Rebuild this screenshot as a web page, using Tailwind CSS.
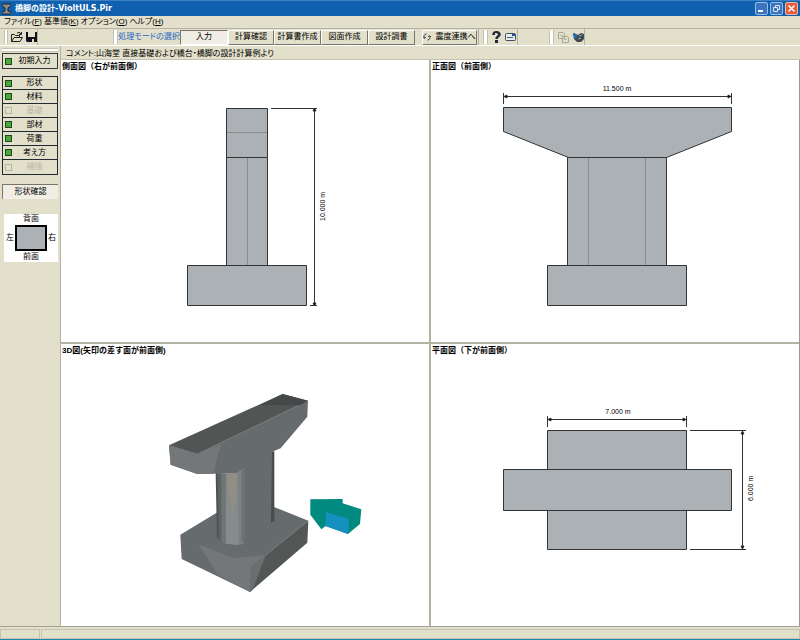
<!DOCTYPE html>
<html lang="ja">
  <head>
    <meta charset="UTF-8" />
    <meta name="viewport" content="width=device-width, initial-scale=1.0" />
    <title>橋脚の設計-VioltULS.Pir</title>
    <script src="https://cdn.jsdelivr.net/npm/@tailwindcss/browser@4"></script>
  </head>
  <body
    class="flex flex-col h-screen overflow-hidden bg-[#e2dfca] text-black text-[8px] leading-[12px] whitespace-nowrap font-['Liberation_Sans','Noto_Sans_CJK_JP',sans-serif] [font-feature-settings:'palt']"
  >
    <!-- Title Bar -->
    <header
      class="flex items-center shrink-0 h-4 pl-[2px] pr-[2px] gap-1 bg-[#1060b0] border-t border-[#3c80c4] text-white"
    >
      <svg class="w-[9px] h-3" viewBox="0 0 9 12" fill="none">
        <path d="M0 1h9v2L6 5v3l3 1v2H0V9l3-1V5L0 3z" fill="#8c8c84" stroke="#1c2430" />
      </svg>
      <h1 class="flex-1 font-bold font-['DejaVu_Sans','Noto_Sans_CJK_JP',sans-serif]">橋脚の設計-VioltULS.Pir</h1>
      <div class="flex gap-[2px]">
        <button aria-label="最小化" class="w-[13px] h-[13px] rounded-[2px] border border-[#9cbce4] bg-[#3c74c0]">
          <svg class="w-[11px] h-[11px]" viewBox="0 0 11 11"><path d="M2 7h5v2H2z" fill="#fff" /></svg>
        </button>
        <button aria-label="元に戻す" class="w-[13px] h-[13px] rounded-[2px] border border-[#9cbce4] bg-[#3c74c0]">
          <svg class="w-[11px] h-[11px]" viewBox="0 0 11 11" fill="none" stroke="#dce8f8">
            <path d="M4.500 4V2.500h4v4H7M2.500 4.500h4v4h-4z" />
          </svg>
        </button>
        <button aria-label="閉じる" class="w-[13px] h-[13px] rounded-[2px] border border-[#f0b8a8] bg-[#e45c3c]">
          <svg class="w-[11px] h-[11px]" viewBox="0 0 11 11" stroke="#fff" stroke-width="1.500">
            <path d="M2.500 2.500l6 6M8.500 2.500l-6 6" />
          </svg>
        </button>
      </div>
    </header>

    <!-- Menu -->
    <nav class="flex items-center shrink-0 h-3 pl-1 gap-[2px]">
      <a href="#">ファイル(<u>F</u>)</a>
      <a href="#">基準値(<u>K</u>)</a>
      <a href="#">オプション(<u>O</u>)</a>
      <a href="#">ヘルプ(<u>H</u>)</a>
    </nav>

    <!-- Toolbar -->
    <div class="flex items-stretch shrink-0 h-[18px] border-t border-[#b4b2a2] border-b border-b-white">
      <div class="flex items-center w-[38px] pl-1 gap-[3px] border-r border-[#b4b2a2]">
        <span class="w-1 h-[14px] border-x border-[#c4c2b0] bg-white"></span>
        <button aria-label="開く">
          <svg class="w-3 h-3" viewBox="0 0 12 12" fill="none" stroke="#202020">
            <path d="M.5 10.500v-7h3l1 1h4v2M.5 10.500l2.500-4h8.500l-2.500 4zM6 2.500c1-1.500 3-1.500 4 .500M10.500 1v2.500H8" />
          </svg>
        </button>
        <button aria-label="保存">
          <svg class="w-[11px] h-3" viewBox="0 0 11 12">
            <path d="M0 1h11v10H1L0 10z" fill="#101018" />
            <path d="M2 1h7v5H2zM6 8h2v3H6z" fill="#e2dfca" />
          </svg>
        </button>
      </div>
      <div class="flex items-center w-[366px] ml-[75px] border-r border-[#b4b2a2]">
        <span class="w-[5px] h-[14px] shrink-0 border-x border-[#c4c2b0] bg-white"></span>
        <span class="w-[62px] shrink-0 text-center text-[#2464c4]">処理モードの選択</span>
        <button class="w-12 h-[15px] border border-t-[#77756a] border-l-[#77756a] border-r-white border-b-white bg-[#f0ede4]">入力</button>
        <button class="w-[46px] h-[15px] border border-t-white border-l-white border-r-[#77756a] border-b-[#77756a]">計算確認</button>
        <button class="w-[47px] h-[15px] border border-t-white border-l-white border-r-[#77756a] border-b-[#77756a]">計算書作成</button>
        <button class="w-[47px] h-[15px] border border-t-white border-l-white border-r-[#77756a] border-b-[#77756a]">図面作成</button>
        <button class="w-[47px] h-[15px] border border-t-white border-l-white border-r-[#77756a] border-b-[#77756a]">設計調書</button>
        <button class="flex items-center justify-center gap-1 w-[55px] h-[15px] ml-[7px] border border-t-white border-l-white border-r-[#77756a] border-b-[#77756a]">
          <svg class="w-2 h-2" viewBox="0 0 8 8" fill="none" stroke="#404848">
            <path d="M3.500 1C1 1 .5 3 1.500 5M0 4l1.500 1.500L3 4M4.500 7C7 7 7.500 5 6.500 3M5 4l1.500-1.500L8 4" />
          </svg>
          震度連携へ
        </button>
      </div>
      <div class="flex items-center w-[35px] ml-1 gap-1 border-r border-[#b4b2a2]">
        <span class="w-[5px] h-[14px] border-x border-[#c4c2b0] bg-white"></span>
        <button aria-label="ヘルプ">
          <svg class="w-[9px] h-3" viewBox="0 0 9 12" fill="none">
            <path d="M1.500 4C1.500 .500 7.500 .500 7.500 3.500 7.500 5.500 4.500 5 4.500 8" stroke="#202830" stroke-width="2.500" />
            <path d="M3 9h3v3H3z" fill="#202830" />
            <path d="M3 2.500h2" stroke="#d0d0c8" />
          </svg>
        </button>
        <button aria-label="メール">
          <svg class="w-[11px] h-2" viewBox="0 0 11 8">
            <rect x=".5" y=".5" width="10" height="7" rx="1" fill="#e8ecec" stroke="#405060" />
            <path d="M2 4h6v1H2z" fill="#506078" />
            <path d="M7 1h3v2H7z" fill="#2050a0" />
          </svg>
        </button>
      </div>
      <div class="flex items-center w-9 ml-[31px] gap-1 border-r border-[#b4b2a2]">
        <span class="w-[5px] h-[14px] border-x border-[#c4c2b0] bg-white"></span>
        <button aria-label="コピー" disabled>
          <svg class="w-[11px] h-3" viewBox="0 0 11 12" fill="none" stroke="#aaa898">
            <path d="M.5 1.500h5l1 1v5h-6zM4.500 5.500h5l1 1v5h-6zM2.500 4.500h2M6.500 8.500h2" />
          </svg>
        </button>
        <button aria-label="表示設定">
          <svg class="w-[11px] h-[11px]" viewBox="0 0 11 11">
            <path d="M0 1l3 1 2 1 3-2 3 1v5l-3 3H4L1 7z" fill="#404850" />
            <path d="M0 1h2v2h2v3H1z" fill="#2070c0" />
            <path d="M6 4l3-1M5 7l3-1" stroke="#a0a8a8" />
          </svg>
        </button>
      </div>
    </div>

    <div class="flex flex-1 min-h-0">
      <!-- Side Menu -->
      <aside class="flex flex-col w-[61px] shrink-0 pt-[2px] px-[2px] border-r border-[#b4b2a2]">
        <span class="h-1 border-y border-[#c4c2b0] bg-white"></span>
        <button class="flex items-center h-4 mt-px border border-[#33383a] pl-[2px]">
          <span class="w-[7px] h-[7px] border border-[#204820] bg-[#48a838]"></span>
          <span class="flex-1 text-center">初期入力</span>
        </button>
        <div class="flex flex-col mt-[7px] border border-[#202830] divide-y divide-[#202830]">
          <button class="flex items-center h-[13px] pl-[2px]">
            <span class="w-[7px] h-[7px] border border-[#204820] bg-[#48a838]"></span>
            <span class="flex-1 text-center">形状</span>
          </button>
          <button class="flex items-center h-[14px] pl-[2px]">
            <span class="w-[7px] h-[7px] border border-[#204820] bg-[#48a838]"></span>
            <span class="flex-1 text-center">材料</span>
          </button>
          <button disabled class="flex items-center h-[14px] pl-[2px] text-[#b8b6a6]">
            <span class="w-[7px] h-[7px] border border-[#b8b6a6]"></span>
            <span class="flex-1 text-center">基礎</span>
          </button>
          <button class="flex items-center h-[14px] pl-[2px]">
            <span class="w-[7px] h-[7px] border border-[#204820] bg-[#48a838]"></span>
            <span class="flex-1 text-center">部材</span>
          </button>
          <button class="flex items-center h-[14px] pl-[2px]">
            <span class="w-[7px] h-[7px] border border-[#204820] bg-[#48a838]"></span>
            <span class="flex-1 text-center">荷重</span>
          </button>
          <button class="flex items-center h-[14px] pl-[2px]">
            <span class="w-[7px] h-[7px] border border-[#204820] bg-[#48a838]"></span>
            <span class="flex-1 text-center">考え方</span>
          </button>
          <button disabled class="flex items-center h-[14px] pl-[2px] text-[#b8b6a6]">
            <span class="w-[7px] h-[7px] border border-[#b8b6a6]"></span>
            <span class="flex-1 text-center">補強</span>
          </button>
        </div>
        <button class="h-[15px] mt-[9px] border-t border-l border-[#77756a] bg-[#f0ede4]">形状確認</button>

        <!-- Direction key -->
        <div class="grid grid-cols-[10px_32px_10px] justify-center items-center mt-[15px] ml-[2px] h-12 text-center bg-white">
          <span class="col-span-3 leading-[10px]">背面</span>
          <span>左</span>
          <span class="h-[26px] border-2 border-black bg-[#acb1b5]"></span>
          <span>右</span>
          <span class="col-span-3 leading-[10px]">前面</span>
        </div>
      </aside>

      <main class="flex flex-col flex-1 min-w-0">
        <p class="h-[14px] pl-[5px] leading-[15px] border-b border-[#c4c2b0]">
          コメント:山海堂 直接基礎および橋台・橋脚の設計計算例より
        </p>

        <div class="grid grid-cols-2 grid-rows-2 gap-[2px] flex-1 min-h-0 bg-[#b4b2a2] border-r border-[#9c9a8c]">
          <!-- Side view -->
          <section class="flex flex-col min-h-0 bg-white">
            <h2 class="pl-px font-bold leading-[14px] [font-feature-settings:normal]">側面図（右が前面側）</h2>
            <svg class="flex-1 min-h-0 w-full" viewBox="61 74 368 268" fill="none" stroke="#303436">
              <g fill="#acb1b5">
                <path d="M226.500 108.500h41v49h-41zM226.500 157.500h41v108h-41zM187.500 265.500h119v40h-119z" />
              </g>
              <path d="M227 132.500h40M247.500 158v107" stroke="#888c8e" />
              <path d="M271 108.500h46M314.500 108v197M310 305.500h7" />
              <path d="M313 111l1.500-3 1.500 3zM313 303l1.500 3 1.500-3z" fill="#000" />
              <text transform="translate(325 221) rotate(-90)" font-size="7" font-family="Liberation Sans, sans-serif" fill="#000" stroke="none">10.000 m</text>
            </svg>
          </section>

          <!-- Front view -->
          <section class="flex flex-col min-h-0 bg-white">
            <h2 class="pl-px font-bold leading-[14px] [font-feature-settings:normal]">正面図（前面側）</h2>
            <svg class="flex-1 min-h-0 w-full" viewBox="431 74 368 268" fill="none" stroke="#303436">
              <g fill="#acb1b5">
                <path d="M503.500 107.500h228v24l-65 26h-98l-65-26z" />
                <path d="M567.500 157.500h99v108h-99zM547.500 265.500h139v40h-139z" />
              </g>
              <path d="M588.500 158v107M645.500 158v107" stroke="#888c8e" />
              <path d="M503.500 93v11M731.500 93v11M503 96.500h228" />
              <path d="M507 95l-3 1.500 3 1.500zM728 95l3 1.500-3 1.500z" fill="#000" />
              <text x="617" y="91" text-anchor="middle" font-size="7" font-family="Liberation Sans, sans-serif" fill="#000" stroke="none">11.500 m</text>
            </svg>
          </section>

          <!-- 3D view -->
          <section class="flex flex-col min-h-0 bg-white">
            <h2 class="pl-px font-bold leading-[14px] [font-feature-settings:normal]">3D図(矢印の差す面が前面側)</h2>
            <svg class="flex-1 min-h-0 w-full" viewBox="61 358 368 268">
              <g transform="translate(150 380) scale(.3333)">
                <!-- footing -->
                <path d="M91 464L200 398 370 380 475 422 302 562 300 636 95 537z" fill="#666b6d" />
                <path d="M145 492L250 534 345 526 302 562 300 636 205 585z" fill="#737779" />
                <path d="M302 562L475 422 472 488 300 636z" fill="#525655" />
                <path d="M302 562L348 524 308 629 300 636z" fill="#696e70" />
                <!-- column and beam -->
                <path d="M142 222L474 62 472 110 392 205 370 214 366 428 280 482V268L262 280 142 282 62 254 57 196z" fill="#666b6d" />
                <path d="M57 196L142 222 215 192 204 222 190 282H142L62 254z" fill="#737779" />
                <path d="M57 196L398 42 474 62 142 222z" fill="#515655" />
                <path d="M332 74L398 42 474 62 450 76z" fill="#444849" />
                <path d="M366 216l7-2v208l-10 6z" fill="#474c4c" />
                <path d="M197 280h12v200l-8-8z" fill="#4b5051" />
                <path d="M203 280h14v206l-11-8z" fill="#5e6364" />
                <path d="M214 280h16v212l-15-6z" fill="#707577" />
                <path d="M228 280l34-2 18-12v226l-20 3-32-4z" fill="#868b8b" />
                <path d="M232 284l30-5-4 80-8 50-12-60z" fill="#918e83" />
                <path d="M262 280l13-6v218h-9z" fill="#7d8283" />
                <path d="M274 272l11-7v213l-11 14z" fill="#6d7274" />
                <!-- direction arrow -->
                <path d="M481 358L578 357V370L634 388 630 432 594 462 527 438 514 448 481 404z" fill="#008a80" />
                <path d="M528 396L597 418 594 462 526 438z" fill="#1690c0" />
              </g>
            </svg>
          </section>

          <!-- Plan view -->
          <section class="flex flex-col min-h-0 bg-white">
            <h2 class="pl-px font-bold leading-[14px] [font-feature-settings:normal]">平面図（下が前面側）</h2>
            <svg class="flex-1 min-h-0 w-full" viewBox="431 358 368 268" fill="none" stroke="#303436">
              <g fill="#acb1b5">
                <path d="M547.500 430.500h139v119h-139z" />
                <path d="M503.500 469.500h228v41h-228z" />
              </g>
              <path d="M547.500 416v11M686.500 416v11M547 419.500h139" />
              <path d="M551 418l-3 1.500 3 1.500zM683 418l3 1.500-3 1.500z" fill="#000" />
              <path d="M690 430.500h56M690 549.500h56M742.500 430v119" />
              <path d="M741 434l1.500-3 1.500 3zM741 546l1.500 3 1.500-3z" fill="#000" />
              <text x="618" y="414" text-anchor="middle" font-size="7" font-family="Liberation Sans, sans-serif" fill="#000" stroke="none">7.000 m</text>
              <text transform="translate(753 501) rotate(-90)" font-size="7" font-family="Liberation Sans, sans-serif" fill="#000" stroke="none">6.000 m</text>
            </svg>
          </section>
        </div>
      </main>
    </div>

    <!-- Status Bar -->
    <footer class="flex shrink-0 h-[14px] pt-[2px] border-t border-t-[#a4a294] border-b border-b-[#2088b0]">
      <span class="w-10 border border-[#c4c2b0]"></span>
      <span class="flex-1 ml-px border border-[#c4c2b0]"></span>
    </footer>
  </body>
</html>
